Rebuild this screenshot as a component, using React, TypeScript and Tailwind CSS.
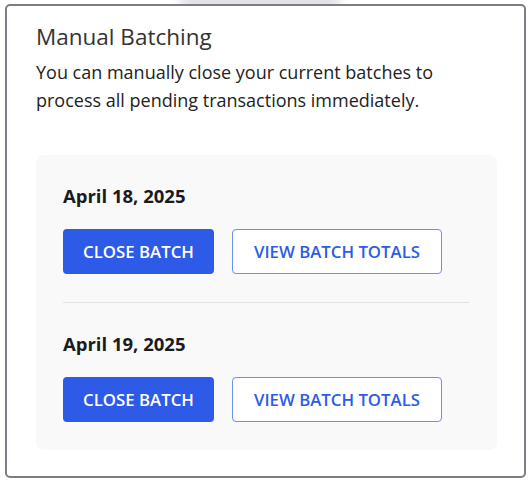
import React from "react";

type Batch = { date: string };

const batches: Batch[] = [{ date: "April 18, 2025" }, { date: "April 19, 2025" }];

function BatchRow({ batch, last }: { batch: Batch; last: boolean }) {
  return (
    <div className={last ? "pt-[29px]" : "pb-[28px] border-b border-[#e2e3e5]"}>
      <div className="text-[18.5px] font-bold text-[#1b1b1b] leading-[24px]">{batch.date}</div>
      <div className="mt-[21px] flex gap-[18px]">
        <button className="h-[45px] w-[151px] rounded-[4px] bg-[#2d5be8] text-white text-[16.8px] font-semibold">
          CLOSE BATCH
        </button>
        <button className="h-[45px] w-[210px] rounded-[4px] border-[1.5px] border-[#6b90f0] bg-white text-[#2d5be8] text-[16.8px] font-semibold">
          VIEW BATCH TOTALS
        </button>
      </div>
    </div>
  );
}

export default function App() {
  return (
    <div className="relative w-[528px] h-[483px] bg-white pt-[4px] pl-[5px] font-['Open_Sans','Noto_Sans',sans-serif]">
      {/* soft shadow leaking in from the element above */}
      <div className="absolute left-[180px] top-[-6px] h-[14px] w-[160px] rounded-full bg-[#d9dadd] blur-[6px]" />
      <div className="relative w-[521px] h-[474px] rounded-[5px] border-2 border-[#7b7e87] bg-white px-[29px] pt-[16px]">
        <h2 className="text-[22.5px] leading-[30px] text-[#333] font-normal">Manual Batching</h2>
        <p className="mt-[6px] max-w-[440px] text-[18px] leading-[28px] text-[#222]">
          You can manually close your current batches to process all pending transactions immediately.
        </p>
        <div className="mt-[41px] w-[461px] rounded-[8px] bg-[#f9f9fa] pl-[27px] pr-[28px] pt-[29px] pb-[28px]">
          {batches.map((b, i) => (
            <BatchRow key={b.date} batch={b} last={i === batches.length - 1} />
          ))}
        </div>
      </div>
    </div>
  );
}
